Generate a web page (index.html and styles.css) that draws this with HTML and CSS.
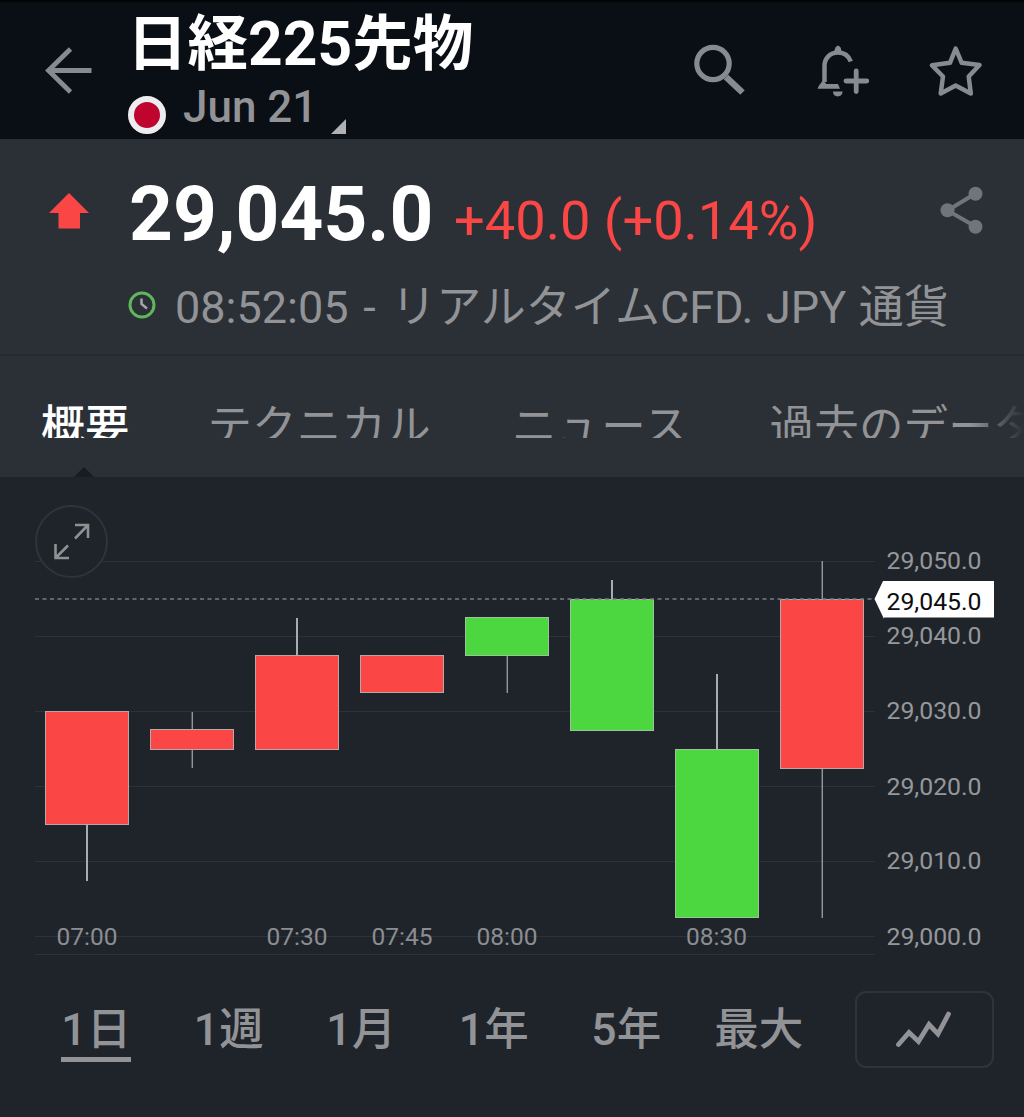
FILE: index.html
```html
<!DOCTYPE html>
<html lang="ja">
<head>
<meta charset="utf-8">
<title>日経225先物</title>
<link rel="stylesheet" href="styles.css">
</head>
<body>
<div class="app">
  <header class="topbar">
    <svg class="back" width="50" height="50" viewBox="44 45 50 50"><path d="M70.5 49L48.5 70.5L70.5 92M48 70.5H91.5"/></svg>
    <div class="heading">
      <h1 class="title">日経225先物</h1>
      <div class="contract">
        <span class="flag"></span>
        <span class="month">Jun 21</span>
        <svg class="corner" width="15" height="15" viewBox="0 0 15 15"><path d="M15 0V15H0Z"/></svg>
      </div>
    </div>
    <div class="actions">
      <svg width="54" height="56" viewBox="692 42 54 56"><circle cx="713" cy="63.5" r="16.2" stroke-width="5.2"/><path d="M726 77L742.5 92.5" stroke-width="6.5"/></svg>
      <svg width="56" height="56" viewBox="815 42 56 56"><path d="M850.8 61.5C848.5 55.500 844 52.500 838 52.500C830 52.500 824.500 58.500 824.500 66V82" stroke-width="4.500"/><path class="fill" d="M834.500 52C834.500 43.500 841.500 43.500 841.500 52ZM823 80.500L826.500 84H838L840 88.800H817.500L819 85.500ZM833 91.500H842.500C842.500 98 833 98 833 91.500Z"/><path d="M856.200 71V91.500M846 81H866.800" stroke-width="4.800" stroke-linecap="round"/></svg>
      <svg width="54" height="56" viewBox="929 42 54 56"><path d="M955.700 48.500L961.700 62.800L979.500 65L968.700 76.500L970.800 93.500L955.700 85.500L940.700 93.500L943 76.500L932 65.300L950 62.800Z" stroke-width="4.500" stroke-linejoin="round"/></svg>
    </div>
  </header>

  <section class="quote">
    <div class="price-row">
      <svg class="up" width="40" height="36" viewBox="0 0 40 36"><path d="M20 0L40 20H31V35.500H9.500V20H0Z"/></svg>
      <span class="price">29,045.0</span>
      <span class="change">+40.0 (+0.14%)</span>
      <svg class="share" width="46" height="50" viewBox="939 185 46 50"><path d="M975.500 193.500L947.500 210.500L975.500 226.500"/><circle cx="975.500" cy="193.700" r="7"/><circle cx="947.500" cy="210.300" r="7"/><circle cx="975.500" cy="226.700" r="7"/></svg>
    </div>
    <div class="status-row">
      <svg width="28" height="28" viewBox="0 0 28 28"><circle cx="14" cy="14" r="12" class="ring"/><path d="M13.500 7.500V13L19 17.500" class="hands"/></svg>
      <span class="status">08:52:05 <span class="dash">-</span> リアルタイムCFD. JPY 通貨</span>
    </div>
  </section>

  <nav class="tabs">
    <span class="tab active">概要</span>
    <span class="tab">テクニカル</span>
    <span class="tab">ニュース</span>
    <span class="tab">過去のデータ</span>
  </nav>

  <main class="chart">
    <svg class="plot" width="1024" height="495" viewBox="0 477 1024 495">
      <g class="grid"><path d="M35 561.500H875M35 636.500H875M35 711.500H875M35 786.500H875M35 861.500H875M35 936.500H875M35 954.500H875"/></g>
      <g class="wicks"><path d="M87 825V881M297 618V655M612 580V599M717 674V749" stroke-width="2"/><path d="M192.250 712V768M507.250 656V693M822.250 561V918" stroke-width="1.200"/></g>
      <g class="down">
        <rect x="45.500" y="711.500" width="83" height="113"/>
        <rect x="150.500" y="729.500" width="83" height="20"/>
        <rect x="255.500" y="655.500" width="83" height="94"/>
        <rect x="360.500" y="655.500" width="83" height="37"/>
        <rect x="780.500" y="599.500" width="83" height="169"/>
      </g>
      <g class="rise">
        <rect x="465.500" y="617.500" width="83" height="38"/>
        <rect x="570.500" y="599.500" width="83" height="131"/>
        <rect x="675.500" y="749.500" width="83" height="168"/>
      </g>
      <path class="last" d="M35 599H875"/>
      <g class="prices">
        <text x="886.500" y="569">29,050.0</text>
        <text x="886.500" y="644">29,040.0</text>
        <text x="886.500" y="719">29,030.0</text>
        <text x="886.500" y="794.500">29,020.0</text>
        <text x="886.500" y="869">29,010.0</text>
        <text x="886.500" y="945">29,000.0</text>
      </g>
      <path class="tag" d="M883 581H994V617.500H884V619L874.500 599Z"/>
      <text class="tag-text" x="886.500" y="610">29,045.0</text>
      <g class="times">
        <text x="87" y="945">07:00</text>
        <text x="297" y="945">07:30</text>
        <text x="402" y="945">07:45</text>
        <text x="507" y="945">08:00</text>
        <text x="716.500" y="945">08:30</text>
      </g>
    </svg>
    <div class="expand"><svg width="38" height="38" viewBox="53 523 38 38"><path d="M75 525H88V538M88 525L75 538.500M55.500 544V558H69M55.500 558L68 545.500"/></svg></div>
  </main>

  <footer class="ranges">
    <div class="range-list">
      <span class="range active">1日</span>
      <span class="range">1週</span>
      <span class="range">1月</span>
      <span class="range">1年</span>
      <span class="range">5年</span>
      <span class="range">最大</span>
    </div>
    <div class="chart-type"><svg width="58" height="38" viewBox="896 1011 58 38"><path d="M898.500 1044.500L909 1032.500L918.500 1041.500L929 1024.500L938 1034L948.500 1014"/></svg></div>
  </footer>
</div>
</body>
</html>
```
FILE: styles.css
```css
* { box-sizing: border-box; }
body {
  margin: 0;
  background: #1f242b;
  color: #929396;
  font-family: Roboto, "Noto Sans CJK JP", sans-serif;
}
svg { display: block; flex: none; fill: none; }
.app { width: 1024px; height: 1117px; overflow: hidden; }

.topbar {
  display: flex;
  height: 139px;
  border-top: 2px solid #030507;
  background: #0a0e15;
}
.back { margin: 43px 0 0 44px; stroke: #868a92; stroke-width: 4.8; }
.heading { width: 562px; padding-left: 34px; }
.title {
  margin: 8px 0 1px -1px;
  color: #fff;
  font-size: 60.5px;
  font-weight: 700;
  line-height: 70px;
  white-space: nowrap;
}
.contract { display: flex; height: 54px; }
.flag {
  width: 38px;
  height: 38px;
  margin: 15px 0 0;
  border: 6px solid #ededef;
  border-radius: 50%;
  background: #bf0430;
}
.month { width: 131px; margin: -1px 0 0 17px; font-size: 44px; font-weight: 500; line-height: 54px; white-space: nowrap; }
.corner { margin: 38px 0 0 17px; fill: #b0b1b3; }
.actions { display: flex; gap: 69px; margin: 40px 0 0 36px; stroke: #868a92; }
.actions svg + svg + svg { margin-left: -11px; }
.actions .fill { fill: #868a92; stroke: none; }

.quote { height: 217px; background: #2b3037; border-bottom: 2px solid #262a31; }
.price-row { display: flex; height: 130px; padding-left: 49px; align-items: flex-start; }
.up { margin-top: 54px; fill: #fb4646; }
.price { width: 325px; margin: 30px 0 0 40px; color: #fff; font-size: 76.5px; font-weight: 700; line-height: 90px; }
.change { width: 485px; margin: 50px 0 0; color: #fb4646; font-size: 54.2px; line-height: 64px; white-space: nowrap; }
.share { margin-top: 46px; fill: #70747c; }
.share path { fill: none; stroke: #70747c; stroke-width: 4; }
.status-row { display: flex; align-items: center; height: 72px; padding-left: 128px; }
.ring { stroke: #60b65d; stroke-width: 3; }
.hands { stroke: #a5a8ac; stroke-width: 2.500; }
.status { margin: 5px 0 0 19px; font-size: 45px; line-height: 60px; white-space: nowrap; word-spacing: 1.5px; }
.dash { margin: 0 3px 0 2px; }

.tabs {
  position: relative;
  display: flex;
  gap: 81px;
  height: 121px;
  padding: 38px 0 0 41px;
  overflow: hidden;
  background: #2b3037;
}
.tab { flex: none; height: 44px; overflow: hidden; font-size: 44.5px; line-height: 66px; letter-spacing: 0.2px; white-space: nowrap; }
.tab.active { margin-right: -3px; color: #fff; font-size: 44px; font-weight: 500; }
.tabs::before {
  content: "";
  position: absolute;
  left: 74px;
  bottom: 0;
  border: solid transparent;
  border-width: 0 10px 10px;
  border-bottom-color: #171b22;
}
.tabs::after {
  content: "";
  position: absolute;
  top: 0;
  right: 0;
  width: 54px;
  height: 100%;
  background: linear-gradient(90deg, rgba(43, 48, 55, 0), #2b3037);
}

.chart { position: relative; height: 495px; }
.grid { stroke: #2b323a; stroke-width: 1; }
.wicks { stroke: #a9abae; }
.down, .rise { stroke: #b5a9a9; stroke-width: 1; }
.down { fill: #fb4646; }
.rise { fill: #4cd63f; stroke: #9cc29a; }
.last { stroke: #777c83; stroke-width: 1.500; stroke-dasharray: 4 3.500; }
.prices, .tag-text { fill: #96979a; font-size: 24.800px; }
.tag { fill: #fff; }
.tag-text { fill: #0c0d0f; }
.times { fill: #8b8d91; font-size: 24.500px; text-anchor: middle; }
.expand {
  position: absolute;
  left: 35px;
  top: 28px;
  display: flex;
  align-items: center;
  justify-content: center;
  width: 73px;
  height: 73px;
  border: 2px solid #2f343c;
  border-radius: 50%;
  background: #1f242b;
}
.expand svg { stroke: #8f9092; stroke-width: 2.600; }

.ranges { display: flex; height: 145px; padding: 19px 0 0 30px; }
.range-list { display: grid; grid-template-columns: repeat(6, 132.500px); width: 825px; justify-items: center; align-items: start; }
.range { height: 71px; font-size: 44.500px; font-weight: 500; line-height: 78px; white-space: nowrap; }
.range.active { border-bottom: 5px solid #929396; }
.chart-type {
  display: flex;
  align-items: center;
  justify-content: center;
  width: 139px;
  height: 77px;
  border: 2px solid #2f343c;
  border-radius: 11px;
}
.chart-type svg { stroke: #929396; stroke-width: 4.800; stroke-linecap: round; }
```
